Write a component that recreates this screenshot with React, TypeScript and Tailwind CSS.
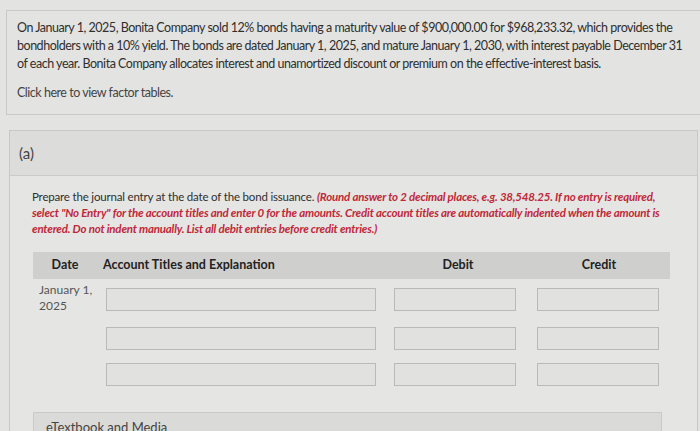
const rows = [0, 1, 2]

export default function App() {
  return (
    <div
      className="w-[700px] h-[431px] overflow-hidden bg-[#e3e3e1] text-[#2f2f2f] pt-[10px] pl-[6px]"
      style={{ fontFamily: "Lato, 'Open Sans', sans-serif" }}
    >
      {/* question text */}
      <div className="h-[105px] border-t border-l border-b border-[#c8c8c6] pl-[10px] pt-[8px] text-[12.5px] leading-[18px] tracking-[-0.48px]">
        <p className="whitespace-nowrap">
          On January 1, 2025, Bonita Company sold 12% bonds having a maturity value of $900,000.00 for $968,233.32, which provides the
          <br />
          bondholders with a 10% yield. The bonds are dated January 1, 2025, and mature January 1, 2030, with interest payable December 31
          <br />
          of each year. Bonita Company allocates interest and unamortized discount or premium on the effective-interest basis.
        </p>
        <p className="mt-[11px] text-[#444]">Click here to view factor tables.</p>
      </div>

      {/* part (a) */}
      <div className="mt-[15px] ml-[3px] w-[689px] h-[320px] border border-[#c8c8c6] bg-[#e5e5e3]">
        <div className="h-[45px] bg-[#dcdcda] border-b border-[#cacac8] flex items-center pl-[9px] text-[15px] text-[#444]">
          (a)
        </div>

        <div className="pl-[22px] pt-[13px] text-[11.5px] leading-[16px] tracking-[-0.18px] whitespace-nowrap">
          <p>
            Prepare the journal entry at the date of the bond issuance.{" "}
            <span className="italic font-bold text-[#c0283a] tracking-[-0.2px]">
              (Round answer to 2 decimal places, e.g. 38,548.25. If no entry is required,
            </span>
          </p>
          <p className="italic font-bold text-[#c0283a] tracking-[-0.2px]">
            select "No Entry" for the account titles and enter 0 for the amounts. Credit account titles are automatically indented when the amount is
          </p>
          <p className="italic font-bold text-[#c0283a] tracking-[-0.2px]">
            entered. Do not indent manually. List all debit entries before credit entries.)
          </p>
        </div>

        <div className="ml-[23px] mr-[27px] mt-[15px]">
          <div className="h-[27px] bg-[#cfcfcd] grid grid-cols-[70px_285px_140px_1fr] items-center text-[12.5px] font-bold text-[#222]">
            <div className="text-center pr-[6px]">Date</div>
            <div>Account Titles and Explanation</div>
            <div className="text-center">Debit</div>
            <div className="text-center">Credit</div>
          </div>

          <div className="mt-[9px] flex flex-col gap-[13px]">
            {rows.map((r) => (
              <div key={r} className="grid grid-cols-[70px_285px_140px_1fr] items-start">
                <div className="pl-[6px] text-[12px] leading-[16px] text-[#555] -mt-[6px]">
                  {r === 0 ? (
                    <>
                      January 1,
                      <br />
                      2025
                    </>
                  ) : null}
                </div>
                <div className="pl-[3px]">
                  <div className="w-[270px] h-[23px] border border-[#b9b9b7] bg-[#e1e1df]" />
                </div>
                <div className="pl-[6px]">
                  <div className="w-[122px] h-[23px] border border-[#b9b9b7] bg-[#e1e1df]" />
                </div>
                <div className="pl-[9px]">
                  <div className="w-[122px] h-[23px] border border-[#b9b9b7] bg-[#e1e1df]" />
                </div>
              </div>
            ))}
          </div>

          <div className="mt-[26px] mr-[8px] h-[30px] border border-[#cacac8] bg-[#dadad8] pl-[12px] pt-[5px] text-[13px] text-[#444]">
            eTextbook and Media
          </div>
        </div>
      </div>
    </div>
  )
}
